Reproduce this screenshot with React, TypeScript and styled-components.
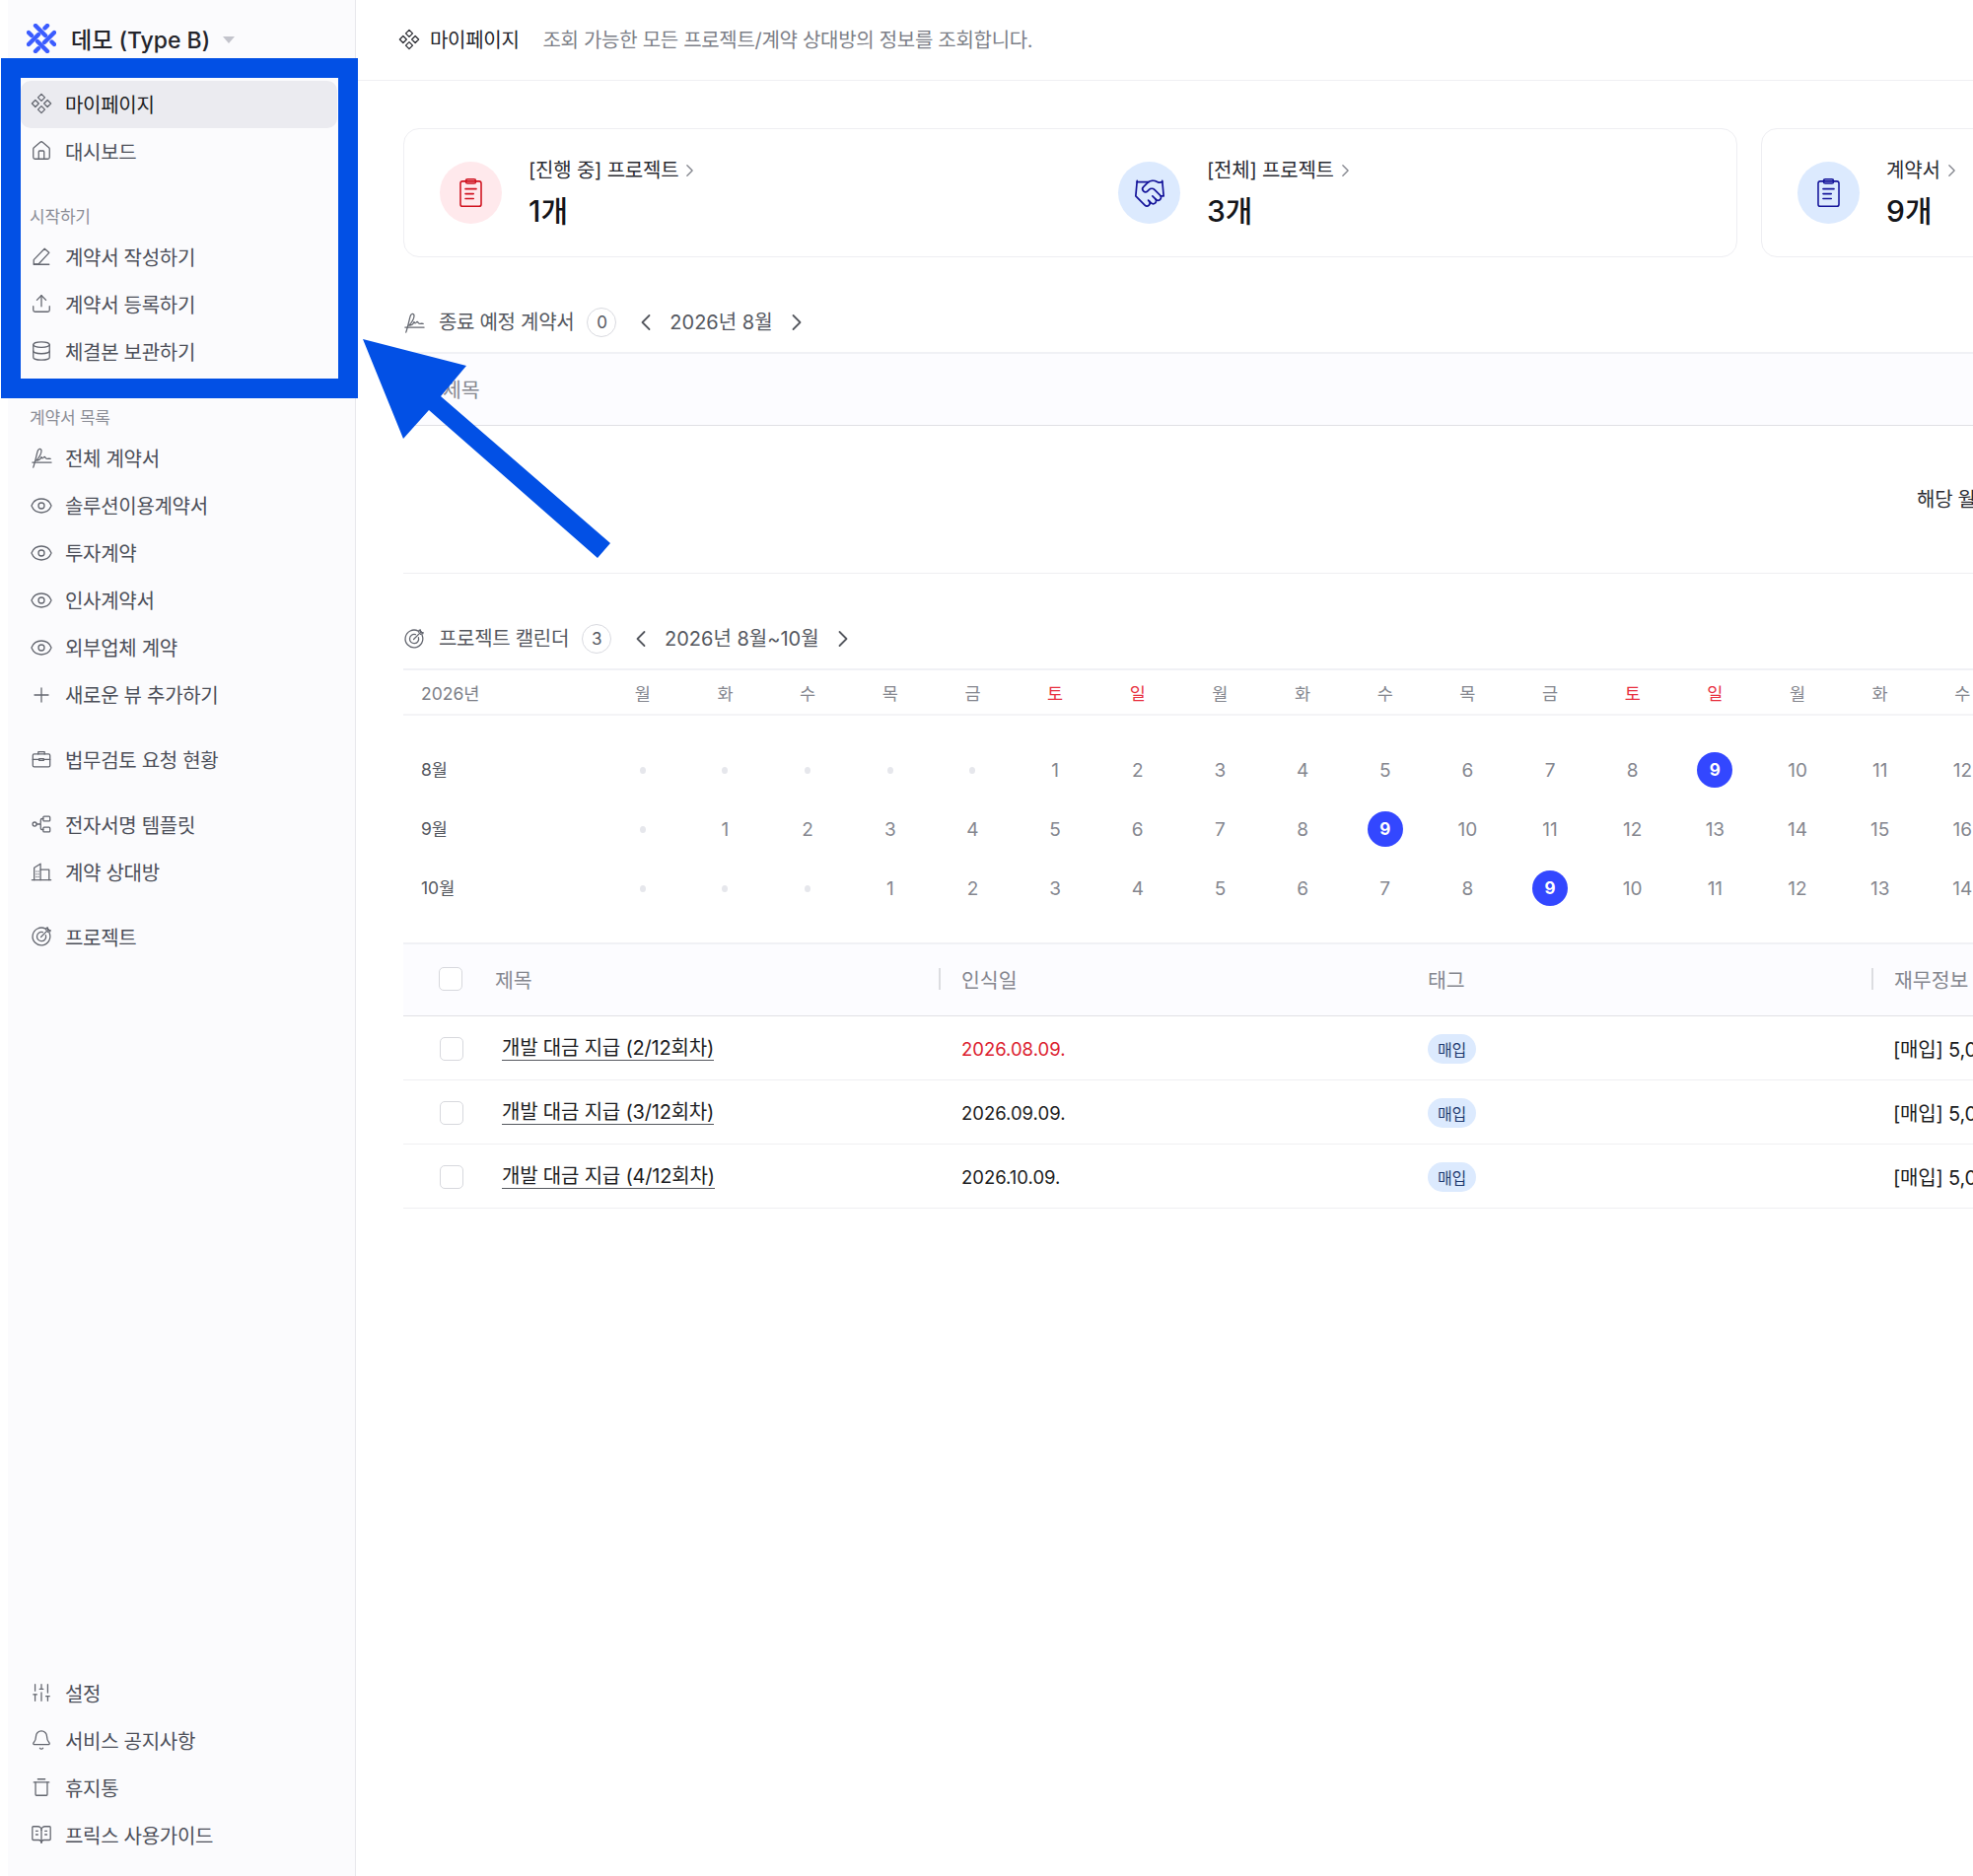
import React from 'react'
import styled, { createGlobalStyle } from 'styled-components'
import {
  Bell,
  BookOpenText,
  Database,
  Eye,
  Handshake,
  House,
  Plus,
  SlidersVertical,
  Upload,
} from 'lucide-react'

const GlobalStyle = createGlobalStyle`
  html, body {
    margin: 0;
    padding: 0;
    background: #ffffff;
  }
  body {
    font-family: Inter, "Noto Sans CJK KR", "Noto Sans", sans-serif;
    color: #1c1d22;
  }
`

const Stroke: React.FC<{ size?: number; children: React.ReactNode; vb?: string }> = ({ size = 22, children, vb = '0 0 24 24' }) => (
  <svg width={size} height={size} viewBox={vb} fill="none" stroke="currentColor" strokeWidth={1.4} strokeLinecap="round" strokeLinejoin="round">
    {children}
  </svg>
)

const DiamondsIcon: React.FC<{ size?: number }> = ({ size }) => (
  <Stroke size={size}>
    <path d="M12 1.500 15.800 5.300 12 9.100 8.200 5.300Z" />
    <path d="M12 14.900 15.800 18.700 12 22.500 8.200 18.700Z" />
    <path d="M5.300 8.200 9.100 12 5.300 15.800 1.500 12Z" />
    <path d="M18.700 8.200 22.500 12 18.700 15.800 14.900 12Z" />
  </Stroke>
)

const SignIcon: React.FC<{ size?: number }> = ({ size }) => (
  <Stroke size={size}>
    <path d="M3 23C5 17 6.500 10 7.500 6 8.300 2 11.800 1.500 12 4.500 12.200 8 9 12.500 6.500 15.500c2.500 0 4.500-1.500 5.500-4 .5 1.500 1.500 2 2.500.5s1.500 0 2.500 1 2 0 5 .5" />
    <path d="M2 17.500H23" />
  </Stroke>
)

const PencilIcon = () => (
  <Stroke>
    <path d="M3.500 16 15.500 3.500l5 4.500L9 20.500H3.500Z" />
    <path d="M3.500 21h17" />
  </Stroke>
)

const BriefcaseIcon = () => (
  <Stroke>
    <rect x="2.500" y="6.500" width="19" height="14" rx="1.500" />
    <path d="M8.500 6.500V4h7v2.500" />
    <path d="M2.500 12.500h7M14.500 12.500h7" />
    <path d="M9.500 11.500h5v2h-5Z" />
  </Stroke>
)

const FlowIcon = () => (
  <Stroke>
    <circle cx="4.500" cy="12" r="2.200" />
    <path d="M6.700 12h3c1 0 1.500-.5 1.500-1.500V7.500c0-1 .5-1.500 1.500-1.500H14M9.700 12h1.500v4.500c0 1 .5 1.500 1.500 1.500H14" />
    <rect x="14" y="3.500" width="7.500" height="5" rx="1" />
    <rect x="14" y="15.500" width="7.500" height="5" rx="1" />
  </Stroke>
)

const BuildingIcon = () => (
  <Stroke>
    <path d="M1.500 21.500h21" />
    <path d="M4 21.500V8l7-4.500v18" />
    <path d="M11 10h9.500v11.500" />
    <path d="M6.500 12h.01M8.800 12h.01M6.500 15h.01M8.800 15h.01M6.500 18h.01M8.800 18h.01" />
  </Stroke>
)

const TargetIcon: React.FC<{ size?: number }> = ({ size }) => (
  <Stroke size={size}>
    <path d="M16.500 3.400A9.700 9.700 0 1 0 20.800 8" />
    <path d="M13.500 7.300A5 5 0 1 0 16.800 10.500" />
    <path d="M11.500 12.500 20 4" />
    <path d="M17 4.500 17.500 2.500 19 2v3h3l-.5 1.500-2.500.5" />
  </Stroke>
)

const TrashIcon = () => (
  <Stroke>
    <path d="M3.500 6.500h17" />
    <path d="M8 3h8" />
    <path d="M5.500 6.500V20a1 1 0 0 0 1 1h11a1 1 0 0 0 1-1V6.500" />
  </Stroke>
)

const ClipboardIcon: React.FC = () => (
  <svg width="27" height="31" viewBox="0 0 24 28" fill="none" stroke="currentColor" strokeWidth={1.4} strokeLinecap="round" strokeLinejoin="round">
    <rect x="2.500" y="3.500" width="19" height="23" rx="2" />
    <rect x="7.500" y="1.500" width="9" height="4" rx="1.500" />
    <path d="M7 10.500h10M7 15h7.500M7 19.500h7.500" />
  </svg>
)

const Logo = () => (
  <svg width="30" height="30" viewBox="0 0 30 30" fill="none" stroke="#3b5cff" strokeWidth="4.400" strokeLinecap="round">
    <path d="M9 2 19 12" />
    <path d="M25.500 18.500 28 21" />
    <path d="M2 9 5 12" />
    <path d="M11 18 21 28" />
    <path d="M21 2 18.500 4.500" />
    <path d="M12 11 2 21" />
    <path d="M28 9 18 19" />
    <path d="M12 25 9 28" />
  </svg>
)

const Chevron: React.FC<{ $dir: 'left' | 'right' }> = ({ $dir }) => (
  <svg width="12" height="18" viewBox="0 0 12 18" fill="none" stroke="currentColor" strokeWidth={1.8} strokeLinecap="round" strokeLinejoin="round">
    <path d={$dir === 'left' ? 'M9.500 2 2.500 9l7 7' : 'M2.500 2l7 7-7 7'} />
  </svg>
)

const Page = styled.div`
  display: flex;
  height: 1903px;
  padding-left: 8px;
  box-sizing: border-box;
  overflow: hidden;
  position: relative;
`

const Sidebar = styled.aside`
  width: 353px;
  flex: none;
  display: flex;
  flex-direction: column;
  box-sizing: border-box;
  background: #fbfbfd;
  border-right: 1px solid #e8e8ec;
  padding: 0 18px 17px 13px;
`

const Workspace = styled.div`
  height: 82px;
  flex: none;
  display: flex;
  align-items: center;
  gap: 15px;
  padding: 0 0 4px 6px;
  box-sizing: border-box;
  font-size: 23px;
  font-weight: 500;
  color: #24252b;
`

const Caret = styled.span`
  width: 0;
  height: 0;
  border-left: 6px solid transparent;
  border-right: 6px solid transparent;
  border-top: 7px solid #c3c4cc;
  margin: 3px 0 0 -2px;
`

const NavGroup = styled.div<{ $top?: number }>`
  display: flex;
  flex-direction: column;
  margin-top: ${(props) => props.$top ?? 0}px;
`

const NavLabel = styled.div<{ $top: number }>`
  height: 36px;
  box-sizing: border-box;
  margin-top: ${(props) => props.$top}px;
  padding: 0 0 2px 9px;
  display: flex;
  align-items: center;
  font-size: 17px;
  letter-spacing: -0.2px;
  color: #8b8d96;
`

const NavItem = styled.div<{ $active?: boolean }>`
  height: 48px;
  flex: none;
  box-sizing: border-box;
  display: flex;
  align-items: center;
  gap: 13px;
  padding: 0 0 2px 10px;
  border-radius: 10px;
  font-size: 20px;
  letter-spacing: -0.3px;
  color: ${(props) => (props.$active ? '#1c1d22' : '#4c4f59')};
  background: ${(props) => (props.$active ? '#ebebf0' : 'transparent')};

  svg {
    flex: none;
    color: #63666f;
  }
`

const ViewIcon = styled(Eye)`
  margin: 2px -1px 0;
`

const AddIcon = styled(Plus)`
  margin: 2px -1px 0;
`

const SidebarFoot = styled.div`
  margin-top: auto;
  display: flex;
  flex-direction: column;
`

const Main = styled.main`
  flex: 1;
  min-width: 0;
  overflow: hidden;
`

const TopBar = styled.header`
  height: 82px;
  display: flex;
  align-items: center;
  box-sizing: border-box;
  border-bottom: 1px solid #f0f0f3;
  padding: 0 0 2px 43px;
  font-size: 20px;
  letter-spacing: -0.3px;

  svg {
    color: #2c2d33;
    margin-right: 10px;
  }
`

const TopTitle = styled.span`
  color: #24252b;
  margin-right: 24px;
`

const TopDesc = styled.span`
  color: #7d7f88;
`

const Content = styled.div`
  width: 3410px;
  margin-left: 48px;
  padding-top: 48px;
`

const CardRow = styled.div`
  display: flex;
  gap: 24px;
`

const Card = styled.section<{ $width: number }>`
  width: ${(props) => props.$width}px;
  height: 131px;
  flex: none;
  box-sizing: border-box;
  display: flex;
  align-items: center;
  padding-left: 36px;
  border: 1px solid #eeeef2;
  border-radius: 16px;
`

const Stat = styled.div<{ $width?: number }>`
  width: ${(props) => (props.$width ? `${props.$width}px` : 'auto')};
  display: flex;
  align-items: center;
  gap: 27px;
`

const StatCircle = styled.div<{ $red?: boolean }>`
  width: 63px;
  height: 63px;
  flex: none;
  border-radius: 50%;
  display: flex;
  align-items: center;
  justify-content: center;
  background: ${(props) => (props.$red ? '#ffe9ec' : '#dceafe')};
  color: ${(props) => (props.$red ? '#d0121f' : '#14149a')};
`

const StatText = styled.div`
  display: flex;
  flex-direction: column;
  gap: 10px;
`

const StatLabel = styled.div`
  display: flex;
  align-items: center;
  gap: 7px;
  font-size: 20px;
  letter-spacing: -0.2px;
  line-height: 26px;
  color: #2b2c33;

  svg {
    color: #85878f;
    width: 9px;
    height: 16px;
  }
`

const StatValue = styled.div`
  font-size: 30px;
  line-height: 36px;
  font-weight: 500;
  color: #14151a;
`

const SectionHead = styled.div<{ $top: number }>`
  height: 30px;
  margin-top: ${(props) => props.$top}px;
  margin-bottom: 15px;
  display: flex;
  align-items: center;
  font-size: 20px;
  letter-spacing: -0.3px;
  line-height: 28px;
  color: #55585f;
`

const SectionTitle = styled.span`
  margin-top: -1px;
`

const SectionIcon = styled.span`
  width: 22px;
  height: 22px;
  margin-right: 14px;
  color: #63666f;
`

const CountBadge = styled.span`
  width: 30px;
  height: 30px;
  box-sizing: border-box;
  margin: 0 24px 0 13px;
  border: 1px solid #d9dae0;
  border-radius: 50%;
  display: flex;
  align-items: center;
  justify-content: center;
  font-size: 17px;
`

const MonthLabel = styled.span`
  margin: -1px 18px 0;
  font-size: 20px;
  letter-spacing: 0;
`

const TableHead = styled.div`
  height: 72px;
  display: grid;
  align-items: center;
  background: #fcfcff;
  border-top: 2px solid #f0f1f5;
  border-bottom: 1px solid #e0e0e5;
  font-size: 20.5px;
  color: #85878f;
`

const EmptyHead = styled(TableHead)`
  grid-template-columns: 40px 1fr;
  height: 70px;
  padding-bottom: 2px;
`

const EmptyBody = styled.div`
  height: 150px;
  box-sizing: border-box;
  padding-bottom: 2px;
  display: flex;
  align-items: center;
  justify-content: center;
  border-bottom: 1px solid #efeff2;
  font-size: 20px;
  letter-spacing: -0.3px;
  color: #2b2c33;
`

const CalendarGrid = styled.div`
  display: grid;
  grid-template-columns: 201px repeat(21, 83.67px);
  align-items: center;
  justify-items: center;
`

const CalendarHead = styled(CalendarGrid)`
  height: 44px;
  border-top: 2px solid #f0f1f5;
  border-bottom: 2px solid #f4f4f6;
  font-size: 17.5px;
  color: #85878f;
`

const CalendarBody = styled.div`
  padding: 25px 0;
`

const CalendarRow = styled(CalendarGrid)`
  height: 60px;
  font-size: 19px;
  color: #85878f;
`

const RowLabel = styled.span<{ $soft?: boolean }>`
  justify-self: start;
  padding: 0 0 ${(props) => (props.$soft ? 0 : 3)}px 18px;
  font-size: 17.5px;
  color: ${(props) => (props.$soft ? '#7d7f88' : '#55585f')};
`

const WeekDay = styled.span<{ $red?: boolean }>`
  color: ${(props) => (props.$red ? '#e8303f' : 'inherit')};
`

const Blank = styled.span`
  width: 6px;
  height: 7px;
  border-radius: 50%;
  background: #e6e7ec;
`

const DueDay = styled.span`
  width: 36px;
  height: 36px;
  border-radius: 50%;
  display: flex;
  align-items: center;
  justify-content: center;
  background: #3347ff;
  color: #ffffff;
  font-size: 17px;
  font-weight: 700;
`

const ListHead = styled(TableHead)`
  grid-template-columns: 93px 450px 473px 473px 600px;
  height: 69px;
  padding-bottom: 3px;
`

const ListRow = styled.div`
  height: 65px;
  box-sizing: border-box;
  padding-top: 1px;
  display: grid;
  grid-template-columns: 93px 450px 473px 473px 600px;
  align-items: center;
  border-bottom: 1px solid #efeff2;
  font-size: 20px;
  letter-spacing: -0.2px;
  color: #1c1d22;
`

const CheckBox = styled.span<{ $row?: boolean }>`
  width: 24px;
  height: 24px;
  box-sizing: border-box;
  margin-left: ${(props) => (props.$row ? 37 : 36)}px;
  border: 1px solid #d7d8dd;
  border-radius: 5px;
  background: #ffffff;
`

const HeadCell = styled.div<{ $sep?: boolean }>`
  display: flex;
  align-items: center;
  gap: 21px;
  padding-left: ${(props) => (props.$sep ? 0 : 23)}px;

  &::before {
    content: '';
    display: ${(props) => (props.$sep ? 'block' : 'none')};
    width: 2px;
    height: 22px;
    background: #dcdde1;
  }
`

const TitleHeadCell = styled.div``

const TitleLink = styled.span`
  justify-self: start;
  margin-left: 7px;
  border-bottom: 1px solid #55585f;
  line-height: 24px;
`

const DateCell = styled.span<{ $overdue?: boolean }>`
  padding-left: 23px;
  font-size: 18.5px;
  letter-spacing: 0;
  color: ${(props) => (props.$overdue ? '#dc2230' : 'inherit')};
`

const TagCell = styled.div`
  padding-left: 23px;
`

const Tag = styled.span`
  width: 49px;
  height: 30px;
  display: inline-flex;
  align-items: center;
  justify-content: center;
  border-radius: 15px;
  background: #dceafe;
  color: #1f3b70;
  font-size: 16px;
`

const FinanceCell = styled.span`
  padding-left: 22px;
`

const HighlightBox = styled.div`
  position: absolute;
  left: 1px;
  top: 59px;
  width: 362px;
  height: 345px;
  box-sizing: border-box;
  border: 20px solid #0250e5;
  pointer-events: none;
`

const ArrowMark = styled.svg`
  position: absolute;
  left: 0;
  top: 0;
  width: 700px;
  height: 620px;
  pointer-events: none;
`

const WEEK = ['월', '화', '수', '목', '금', '토', '일']

const months = [
  { label: '8월', lead: 5, due: 9 },
  { label: '9월', lead: 1, due: 9 },
  { label: '10월', lead: 3, due: 9 },
]

const rows = [
  { title: '개발 대금 지급 (2/12회차)', date: '2026.08.09.', overdue: true },
  { title: '개발 대금 지급 (3/12회차)', date: '2026.09.09.', overdue: false },
  { title: '개발 대금 지급 (4/12회차)', date: '2026.10.09.', overdue: false },
]

const viewItems = ['솔루션이용계약서', '투자계약', '인사계약서', '외부업체 계약']

const App: React.FC = () => {
  const columns = Array.from({ length: 21 }, (_, i) => i)

  return (
    <Page>
      <GlobalStyle />
      <Sidebar>
        <Workspace>
          <Logo />
          <span>데모 (Type B)</span>
          <Caret />
        </Workspace>
        <NavGroup>
          <NavItem $active><DiamondsIcon />마이페이지</NavItem>
          <NavItem><House size={22} strokeWidth={1.4} />대시보드</NavItem>
        </NavGroup>
        <NavLabel $top={23}>시작하기</NavLabel>
        <NavGroup>
          <NavItem><PencilIcon />계약서 작성하기</NavItem>
          <NavItem><Upload size={22} strokeWidth={1.4} />계약서 등록하기</NavItem>
          <NavItem><Database size={22} strokeWidth={1.4} />체결본 보관하기</NavItem>
        </NavGroup>
        <NavLabel $top={24}>계약서 목록</NavLabel>
        <NavGroup>
          <NavItem><SignIcon />전체 계약서</NavItem>
          {viewItems.map((item) => (
            <NavItem key={item}><ViewIcon size={24} strokeWidth={1.3} />{item}</NavItem>
          ))}
          <NavItem><AddIcon size={24} strokeWidth={1.3} />새로운 뷰 추가하기</NavItem>
        </NavGroup>
        <NavGroup $top={18}>
          <NavItem><BriefcaseIcon />법무검토 요청 현황</NavItem>
        </NavGroup>
        <NavGroup $top={18}>
          <NavItem><FlowIcon />전자서명 템플릿</NavItem>
          <NavItem><BuildingIcon />계약 상대방</NavItem>
        </NavGroup>
        <NavGroup $top={18}>
          <NavItem><TargetIcon />프로젝트</NavItem>
        </NavGroup>
        <SidebarFoot>
          <NavItem><SlidersVertical size={22} strokeWidth={1.4} />설정</NavItem>
          <NavItem><Bell size={22} strokeWidth={1.4} />서비스 공지사항</NavItem>
          <NavItem><TrashIcon />휴지통</NavItem>
          <NavItem><BookOpenText size={22} strokeWidth={1.4} />프릭스 사용가이드</NavItem>
        </SidebarFoot>
      </Sidebar>

      <Main>
        <TopBar>
          <DiamondsIcon />
          <TopTitle>마이페이지</TopTitle>
          <TopDesc>조회 가능한 모든 프로젝트/계약 상대방의 정보를 조회합니다.</TopDesc>
        </TopBar>
        <Content>
          <CardRow>
            <Card $width={1353}>
              <Stat $width={688}>
                <StatCircle $red><ClipboardIcon /></StatCircle>
                <StatText>
                  <StatLabel>[진행 중] 프로젝트<Chevron $dir="right" /></StatLabel>
                  <StatValue>1개</StatValue>
                </StatText>
              </Stat>
              <Stat>
                <StatCircle><Handshake size={34} strokeWidth={1.2} /></StatCircle>
                <StatText>
                  <StatLabel>[전체] 프로젝트<Chevron $dir="right" /></StatLabel>
                  <StatValue>3개</StatValue>
                </StatText>
              </Stat>
            </Card>
            <Card $width={500}>
              <Stat>
                <StatCircle><ClipboardIcon /></StatCircle>
                <StatText>
                  <StatLabel>계약서<Chevron $dir="right" /></StatLabel>
                  <StatValue>9개</StatValue>
                </StatText>
              </Stat>
            </Card>
          </CardRow>

          <SectionHead $top={51}>
            <SectionIcon><SignIcon /></SectionIcon>
            <SectionTitle>종료 예정 계약서</SectionTitle>
            <CountBadge>0</CountBadge>
            <Chevron $dir="left" />
            <MonthLabel>2026년 8월</MonthLabel>
            <Chevron $dir="right" />
          </SectionHead>
          <EmptyHead>
            <span />
            <span>제목</span>
          </EmptyHead>
          <EmptyBody>해당 월에 종료 예정인 계약서가 없습니다.</EmptyBody>

          <SectionHead $top={51}>
            <SectionIcon><TargetIcon /></SectionIcon>
            <SectionTitle>프로젝트 캘린더</SectionTitle>
            <CountBadge>3</CountBadge>
            <Chevron $dir="left" />
            <MonthLabel>2026년 8월~10월</MonthLabel>
            <Chevron $dir="right" />
          </SectionHead>
          <CalendarHead>
            <RowLabel $soft>2026년</RowLabel>
            {columns.map((i) => (
              <WeekDay key={i} $red={i % 7 >= 5}>{WEEK[i % 7]}</WeekDay>
            ))}
          </CalendarHead>
          <CalendarBody>
            {months.map((month) => (
              <CalendarRow key={month.label}>
                <RowLabel>{month.label}</RowLabel>
                {columns.map((i) => {
                  const day = i - month.lead + 1
                  if (day < 1) return <Blank key={i} />
                  if (day === month.due) return <DueDay key={i}>{day}</DueDay>
                  return <span key={i}>{day}</span>
                })}
              </CalendarRow>
            ))}
          </CalendarBody>

          <ListHead>
            <CheckBox />
            <TitleHeadCell>제목</TitleHeadCell>
            <HeadCell $sep>인식일</HeadCell>
            <HeadCell>태그</HeadCell>
            <HeadCell $sep>재무정보</HeadCell>
          </ListHead>
          {rows.map((row) => (
            <ListRow key={row.date}>
              <CheckBox $row />
              <TitleLink>{row.title}</TitleLink>
              <DateCell $overdue={row.overdue}>{row.date}</DateCell>
              <TagCell><Tag>매입</Tag></TagCell>
              <FinanceCell>[매입] 5,000,000원</FinanceCell>
            </ListRow>
          ))}
        </Content>
      </Main>

      <HighlightBox />
      <ArrowMark viewBox="0 0 700 620">
        <polygon points="368,344 473,371 447,402 619,551 606,566 435,416 409,445" fill="#0250e5" />
      </ArrowMark>
    </Page>
  )
}

export default App
